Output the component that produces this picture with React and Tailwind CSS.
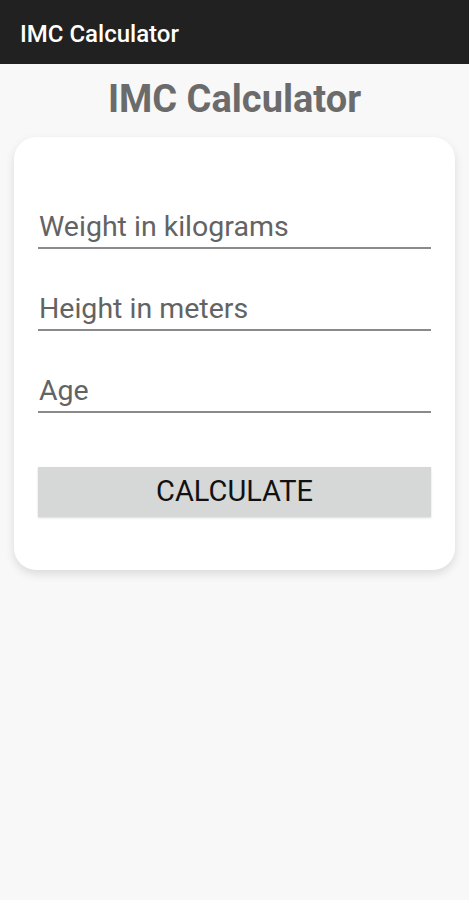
export default function App() {
  const fields = ["Weight in kilograms", "Height in meters", "Age"];
  return (
    <div className="min-h-[900px] bg-[#f8f8f8]" style={{ fontFamily: "Roboto, 'Noto Sans', sans-serif" }}>
      <div className="h-16 bg-[#212121] flex items-start pt-[22px] px-5">
        <span className="text-white text-[24px] font-medium leading-none">IMC Calculator</span>
      </div>
      <h1 className="mt-[12px] text-center text-[38px] leading-[46px] font-bold text-[#6b6b6b]">IMC Calculator</h1>
      <div className="mt-[15px] mx-[14px] bg-white rounded-[22px] shadow-[0_4px_10px_rgba(0,0,0,0.12)] px-6 pt-[73px] pb-[53px]">
        <div className="flex flex-col gap-[43px]">
          {fields.map((f) => (
            <div key={f} className="border-b-2 border-[#8a8a8a] pb-[3px]">
              <div className="h-[34px] text-[28.5px] leading-[34px] text-[#636363] pl-px">{f}</div>
            </div>
          ))}
        </div>
        <button className="mt-[54px] w-full h-[50px] bg-[#d6d7d7] text-[#111] text-[29px] flex items-center justify-center shadow-[0_1px_2px_rgba(0,0,0,0.15)]">
          CALCULATE
        </button>
      </div>
    </div>
  );
}
